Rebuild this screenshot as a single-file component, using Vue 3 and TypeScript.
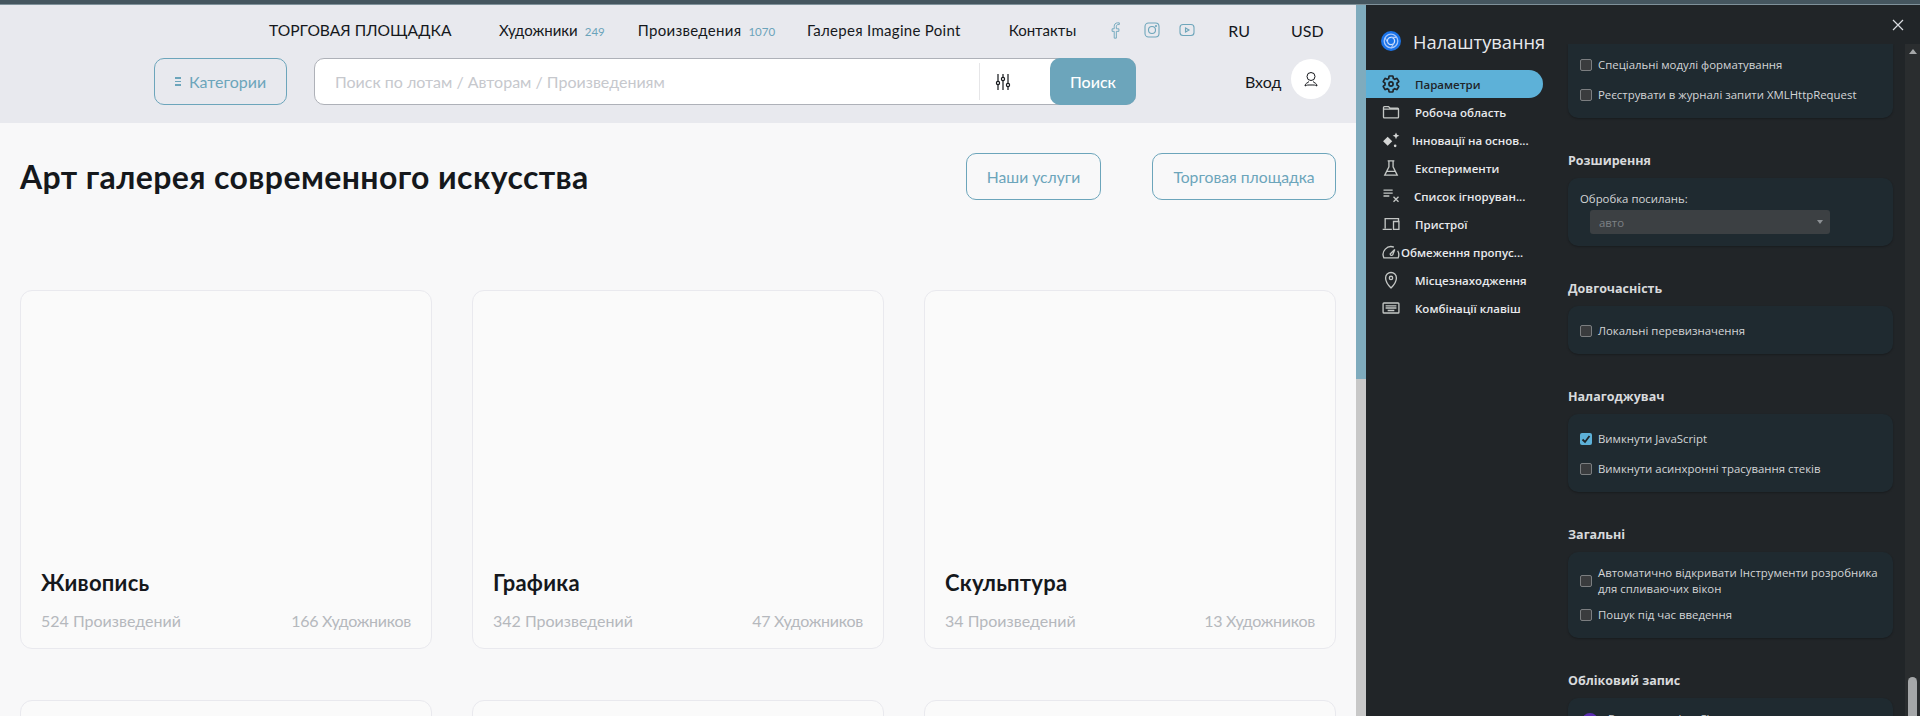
<script setup lang="ts">
const navItems = [
  { label: 'Художники', count: '249', cls: 'gap-47' },
  { label: 'Произведения', count: '1070', cls: 'gap-33 wide' },
  { label: 'Галерея Imagine Point', cls: 'gap-32 wide' },
  { label: 'Контакты', cls: 'gap-48' },
]

const categories = [
  { name: 'Живопись', works: '524 Произведений', artists: '166 Художников' },
  { name: 'Графика', works: '342 Произведений', artists: '47 Художников' },
  { name: 'Скульптура', works: '34 Произведений', artists: '13 Художников' },
]

// Icons are Material-style paths on a 24 box
const sideItems = [
  { label: 'Параметри', cls: 'active', d: 'M19.14 12.94c.04-.3.06-.61.06-.94s-.02-.64-.07-.94l2.03-1.58c.18-.14.23-.41.12-.61l-1.92-3.32c-.12-.22-.37-.29-.59-.22l-2.39.96c-.5-.38-1.03-.7-1.62-.94l-.36-2.54c-.04-.24-.24-.41-.48-.41h-3.84c-.24 0-.43.17-.47.41l-.36 2.54c-.59.24-1.13.57-1.62.94l-2.39-.96c-.22-.08-.47 0-.59.22L2.74 8.87c-.12.21-.08.47.12.61l2.03 1.58c-.05.3-.09.63-.09.94s.02.64.07.94l-2.03 1.58c-.18.14-.23.41-.12.61l1.92 3.32c.12.22.37.29.59.22l2.39-.96c.5.38 1.03.7 1.62.94l.36 2.54c.05.24.24.41.48.41h3.84c.24 0 .44-.17.47-.41l.36-2.54c.59-.24 1.13-.56 1.62-.94l2.39.96c.22.08.47 0 .59-.22l1.92-3.32c.12-.22.07-.47-.12-.61l-2.01-1.58zM12 14.500a2.500 2.500 0 1 1 0-5 2.500 2.500 0 0 1 0 5z' },
  { label: 'Робоча область', d: 'M3 6.500a1 1 0 0 1 1-1h5l2 2h9a1 1 0 0 1 1 1v9.500a1 1 0 0 1-1 1H4a1 1 0 0 1-1-1zM3 8.500h18' },
  { label: 'Інновації на основ...', cls: 'shift-3', fill: true, d: 'M8 8l5.500 5.500L8 19l-5.500-5.500zM18 3l1.200 2.800L22 7l-2.800 1.200L18 11l-1.200-2.800L14 7l2.800-1.200zM17 17.400a1.600 1.600 0 1 1 0 3.200 1.600 1.600 0 0 1 0-3.200z' },
  { label: 'Експерименти', d: 'M8 3.500h8M9.500 3.500v7L4.500 20.500h15L14.500 10.500v-7M7 16h10' },
  { label: 'Список ігноруван...', cls: 'shift-1', d: 'M3 5h11M3 8.500h11M3 12h7M15 13l6 6M21 13l-6 6' },
  { label: 'Пристрої', d: 'M5 17.500V5.500h16V8M2 18.500h11M15 9h6.500v9.500H15z' },
  { label: 'Обмеження пропус...', cls: 'shift-14', d: 'M15.500 6.200A9.500 9.500 0 0 0 3.400 19H20.600A9.500 9.500 0 0 0 20 10.500M11 14.500l5.500-5.500-2.500 6.500a1.700 1.700 0 0 1-3-1z' },
  { label: 'Місцезнаходження', d: 'M12 21.500s-6.500-6.500-6.500-12a6.500 6.500 0 0 1 13 0c0 5.500-6.500 12-6.500 12zM12 11.500a2 2 0 1 1 0-4 2 2 0 0 1 0 4z' },
  { label: 'Комбінації клавіш', d: 'M3.500 6h17a1 1 0 0 1 1 1v10a1 1 0 0 1-1 1h-17a1 1 0 0 1-1-1V7a1 1 0 0 1 1-1zM5.500 9.500h13M5.500 12h13M8 15h8' },
]
</script>

<template>
  <div class="strip"></div>
  <div class="shell">
    <main class="page">
      <header class="head">
        <div class="top-row">
          <span class="market">ТОРГОВАЯ ПЛОЩАДКА</span>
          <span v-for="item in navItems" :key="item.label" class="nav-item" :class="item.cls">
            {{ item.label }}<small v-if="item.count">{{ item.count }}</small>
          </span>
          <svg class="social fb" viewBox="0 0 10 20" width="9" height="17"><path d="M6 19V11h3V8H6V5.500C6 4 6.700 3 8 3h1.500V1H7.500C4.800 1 3.500 2.800 3.500 5.300V8H1v3h2.500v8z" /></svg>
          <svg class="social ig" viewBox="0 0 16 16" width="16" height="16"><rect x="1" y="1" width="14" height="14" rx="3.500" /><circle cx="8" cy="8" r="3.500" /><circle cx="12" cy="4" r=".5" /></svg>
          <svg class="social yt" viewBox="0 0 16 14" width="16" height="14"><rect x="1" y="1.500" width="14" height="11" rx="3" /><path d="M6.500 5v4l3.500-2z" /></svg>
          <span class="lang">RU</span>
          <span class="cur">USD</span>
        </div>
        <div class="search-row">
          <button class="cat-btn"><span class="cat-icon"><i></i><i></i><i></i></span>Категории</button>
          <div class="search">
            <span class="placeholder">Поиск по лотам / Авторам / Произведениям</span>
            <span class="filter">
              <svg viewBox="0 0 16 20" width="16" height="20"><path d="M3 2v16M8 2v16M13 2v16" /><circle cx="3" cy="11" r="1.600" /><circle cx="8" cy="7" r="1.600" /><circle cx="13" cy="13" r="1.600" /></svg>
            </span>
            <button class="search-btn">Поиск</button>
          </div>
          <span class="login">Вход</span>
          <span class="avatar">
            <svg viewBox="0 0 16 16" width="16" height="16"><circle cx="8" cy="5.500" r="4" /><path d="M2 15c0-3 3-3 4-4.500M14 15c0-3-3-3-4-4.500M2 15c2-1.200 3-1 6-1s4-.2 6 1" /></svg>
          </span>
        </div>
      </header>

      <div class="body">
        <div class="title-row">
          <h1>Арт галерея современного искусства</h1>
          <button class="ghost services">Наши услуги</button>
          <button class="ghost market-btn">Торговая площадка</button>
        </div>
        <div class="grid">
          <article v-for="c in categories" :key="c.name" class="card">
            <h2>{{ c.name }}</h2>
            <div class="meta"><span>{{ c.works }}</span><span class="artists">{{ c.artists }}</span></div>
          </article>
          <article v-for="n in 3" :key="n" class="card"></article>
        </div>
      </div>
    </main>
    <div class="page-scroll"><div class="page-thumb"></div></div>

    <aside class="panel">
      <nav class="side">
        <div class="brand">
          <svg viewBox="0 0 20 20" width="20" height="20">
            <circle cx="10" cy="10" r="10" fill="#1a73e8" />
            <circle cx="10" cy="10" r="6.800" fill="none" stroke="#a8c7fa" stroke-width="1.300" />
            <circle cx="10" cy="10" r="3.600" fill="#1a73e8" stroke="#d3e3fd" stroke-width="1.300" />
            <path d="M10 6.400h6M7 12l-3-5.200M13 12l-3 5.200" stroke="#a8c7fa" stroke-width="1.100" fill="none" />
          </svg>
          <span>Налаштування</span>
        </div>
        <div v-for="s in sideItems" :key="s.label" class="side-item" :class="s.cls">
          <svg class="side-icon" :class="{ solid: s.fill }" viewBox="0 0 24 24" width="20" height="20"><path :d="s.d" /></svg>
          <span class="side-label">{{ s.label }}</span>
        </div>
      </nav>

      <div class="settings-wrap">
        <div class="close-row">
          <svg viewBox="0 0 12 12" width="12" height="12"><path d="M1 1l10 10M11 1L1 11" /></svg>
        </div>
        <div class="settings-body">
          <div class="settings">
            <section class="box first">
              <label class="row"><i class="check"></i>Спеціальні модулі форматування</label>
              <label class="row"><i class="check"></i>Реєструвати в журналі запити XMLHttpRequest</label>
            </section>

            <h3>Розширення</h3>
            <section class="box links">
              <div class="field-label">Обробка посилань:</div>
              <div class="select"><span>авто</span><b></b></div>
            </section>

            <h3>Довгочасність</h3>
            <section class="box">
              <label class="row"><i class="check"></i>Локальні перевизначення</label>
            </section>

            <h3>Налагоджувач</h3>
            <section class="box">
              <label class="row"><i class="check on">
                <svg viewBox="0 0 12 12" width="12" height="12"><path d="M2.500 6.500l2.500 2.500 4.500-6" /></svg>
              </i>Вимкнути JavaScript</label>
              <label class="row"><i class="check"></i>Вимкнути асинхронні трасування стеків</label>
            </section>

            <h3>Загальні</h3>
            <section class="box">
              <label class="row tall"><i class="check"></i><span>Автоматично відкривати Інструменти розробника<br />для спливаючих вікон</span></label>
              <label class="row"><i class="check"></i>Пошук під час введення</label>
            </section>

            <h3>Обліковий запис</h3>
            <section class="box account">
              <i class="account-pic"></i>
              <span>Виконано вхід у Chrome як</span>
            </section>
          </div>
          <div class="settings-scroll">
            <b class="arrow"></b>
            <div class="settings-thumb"></div>
          </div>
        </div>
      </div>
    </aside>
  </div>
</template>

<style>
html,
body {
  margin: 0;
  height: 716px;
  overflow: hidden;
  background: #f8f8f9;
}
</style>

<style scoped>
.strip {
  height: 5px;
  background: #45565f;
  border-bottom: 1px solid #7f919a;
  box-sizing: border-box;
}

.shell {
  display: flex;
  height: 711px;
  overflow: hidden;
}

.page {
  width: 1356px;
  flex: none;
  overflow: hidden;
  font-family: "Lato", "Noto Sans", sans-serif;
  color: #15181c;
  background: #f8f8f9;
}

.head {
  height: 118px;
  background: #e8e9ee;
  box-sizing: border-box;
}

.top-row {
  display: flex;
  align-items: center;
  height: 50px;
  padding-left: 269px;
  font-size: 15px;
  white-space: nowrap;
}

.market {
  width: 183px;
  font-size: 15.600px;
}

.nav-item small {
  margin-left: 7px;
  font-size: 11.500px;
  letter-spacing: 0;
  color: #6ba3ba;
}

.wide {
  letter-spacing: 0.3px;
}

.gap-47 { margin-left: 47px; }
.gap-48 { margin-left: 48px; }
.gap-33 { margin-left: 33px; }
.gap-32 { margin-left: 32px; }

.social {
  flex: none;
  fill: none;
  stroke: #6ea6bb;
  stroke-width: 1.100;
}

.fb { margin-left: 35px; }
.ig { margin-left: 24px; }
.yt { margin-left: 19px; }

.lang,
.cur {
  font-size: 16px;
}

.lang { margin-left: 33px; }
.cur { margin-left: 41px; }

.search-row {
  display: flex;
  align-items: center;
  height: 47px;
  margin-top: 3px;
  padding-left: 154px;
}

.cat-btn {
  display: flex;
  align-items: center;
  justify-content: center;
  gap: 8px;
  width: 133px;
  height: 47px;
  border: 1px solid #6ca5bb;
  border-radius: 10px;
  background: transparent;
  color: #6ca5bb;
  font: 16px "Lato", "Noto Sans", sans-serif;
}

.cat-icon {
  display: flex;
  flex-direction: column;
  gap: 2px;
}

.cat-icon i {
  display: block;
  width: 6px;
  height: 1.500px;
  background: #6ca5bb;
}

.search {
  display: flex;
  align-items: center;
  width: 822px;
  height: 47px;
  margin-left: 27px;
  box-sizing: border-box;
  border: 1px solid #aeb1b8;
  border-radius: 10px;
  background: #fff;
}

.placeholder {
  flex: 1;
  padding-left: 20px;
  font-size: 16px;
  color: #c6c8cd;
}

.filter {
  display: flex;
  align-items: center;
  width: 71px;
  height: 37px;
  padding-left: 15px;
  box-sizing: border-box;
  border-left: 1px solid #e6e6e8;
}

.filter svg {
  fill: #fff;
  stroke: #15181c;
  stroke-width: 1.200;
}

.search-btn {
  width: 86px;
  height: 47px;
  margin: 0 -1px 0 0;
  border: 0;
  border-radius: 10px;
  background: #6ca5bb;
  color: #fff;
  font: 500 16px "Lato", "Noto Sans", sans-serif;
}

.login {
  margin-left: 109px;
  font-size: 16px;
}

.avatar {
  display: flex;
  align-items: center;
  justify-content: center;
  width: 40px;
  height: 40px;
  margin: -6px 0 0 10px;
  border-radius: 50%;
  background: #fff;
}

.avatar svg {
  fill: none;
  stroke: #15181c;
  stroke-width: 1;
}

.body {
  padding: 30px 20px 0;
}

.title-row {
  display: flex;
  align-items: center;
  height: 47px;
}

h1 {
  flex: 1;
  margin: 0;
  font-size: 32px;
  font-weight: 700;
  letter-spacing: 0.4px;
}

.ghost {
  width: 135px;
  height: 47px;
  padding: 0;
  border: 1px solid #6ca5bb;
  border-radius: 10px;
  background: transparent;
  color: #6ca5bb;
  font: 15.700px "Lato", "Noto Sans", sans-serif;
}

.market-btn {
  width: 184px;
}

.services {
  margin-right: 51px;
}

.grid {
  display: grid;
  grid-template-columns: repeat(3, 412px);
  gap: 51px 40px;
  margin-top: 90px;
}

.card {
  display: flex;
  flex-direction: column;
  justify-content: flex-end;
  height: 359px;
  padding: 0 20px 18px;
  box-sizing: border-box;
  border: 1px solid #e9e9ee;
  border-radius: 12px;
  background: #fafafa;
}

h2 {
  margin: 0 0 15px;
  font-size: 22px;
  font-weight: 700;
  letter-spacing: 0.25px;
}

.meta {
  display: flex;
  justify-content: space-between;
  font-size: 16px;
  color: #b5b8bd;
}

.artists {
  letter-spacing: -0.25px;
}

.page-scroll {
  width: 10px;
  flex: none;
  background: #c8c8c8;
}

.page-thumb {
  height: 374px;
  background: #7fabbd;
}

.panel {
  display: flex;
  flex: 1;
  min-width: 0;
  background: #212528;
  font-family: "Open Sans", "Noto Sans", sans-serif;
  color: #d8dadc;
}

.side {
  width: 196px;
  flex: none;
  padding-top: 25px;
}

.brand {
  display: flex;
  align-items: center;
  gap: 12px;
  height: 22px;
  margin: 0 0 18px 15px;
  font-size: 18.300px;
  color: #e8eaed;
  white-space: nowrap;
}

.side-item {
  display: flex;
  align-items: center;
  width: 177px;
  height: 28px;
  padding-left: 15px;
  box-sizing: border-box;
  font-size: 11.500px;
  font-weight: 600;
  color: #e8eaed;
  white-space: nowrap;
}

.side-item.active {
  background: #5db1d8;
  color: #1f2428;
  border-radius: 0 14px 14px 0;
}

.side-icon {
  flex: none;
  fill: none;
  stroke: #c4c7c5;
  stroke-width: 1.600;
}

.side-icon.solid {
  fill: #d4d6d5;
  stroke: none;
}

.active .side-icon {
  stroke: #1f2428;
  stroke-width: 2;
}

.side-label {
  margin-left: 14px;
}

.shift-1 .side-label { margin-left: 13px; }
.shift-3 .side-label { margin-left: 11px; }
.shift-14 .side-label { margin-left: 0; }

.settings-wrap {
  flex: 1;
  min-width: 0;
}

.close-row {
  display: flex;
  justify-content: flex-end;
  align-items: center;
  height: 39px;
  padding-right: 16px;
  box-sizing: border-box;
}

.close-row svg {
  fill: none;
  stroke: #dadce0;
  stroke-width: 1.200;
}

.settings-body {
  display: flex;
  justify-content: space-between;
  height: 672px;
  overflow: hidden;
}

.settings {
  width: 325px;
  margin-left: 6px;
}

.box {
  padding: 10px 12px 8px;
  box-sizing: border-box;
  border-radius: 10px;
  background: #1f2a30;
  box-shadow: 0 1px 2px rgb(0 0 0 / 0.25);
}

.box.first {
  height: 74px;
  border-radius: 0 0 10px 10px;
  padding-top: 6px;
}

.links {
  height: 68px;
}

h3 {
  height: 18px;
  margin: 33px 0 9px;
  font-size: 12.500px;
  line-height: 20px;
  font-weight: 700;
  color: #d8dadc;
}

.row {
  display: flex;
  align-items: center;
  gap: 6px;
  height: 30px;
  padding-bottom: 2px;
  box-sizing: border-box;
  font-size: 11.400px;
  color: #d3d5d7;
  white-space: nowrap;
}

.row.tall {
  height: 38px;
  padding-bottom: 0;
  line-height: 16px;
}

.check {
  display: flex;
  flex: none;
  width: 12px;
  height: 12px;
  margin-top: 2px;
  box-sizing: border-box;
  border: 1px solid #7b7e80;
  border-radius: 2px;
  background: #3a3c3e;
}

.tall .check {
  margin-top: 0;
}

.check.on {
  border: 0;
  background: #5db1d8;
}

.check svg {
  fill: none;
  stroke: #202528;
  stroke-width: 1.800;
}

.field-label {
  margin-top: 3px;
  font-size: 11.400px;
  line-height: 16px;
  color: #d3d5d7;
}

.select {
  display: flex;
  align-items: center;
  justify-content: space-between;
  width: 240px;
  height: 24px;
  margin: 3px 0 0 10px;
  padding: 0 7px 0 9px;
  box-sizing: border-box;
  border-radius: 3px;
  background: #3c4043;
  font-size: 11.400px;
  color: #7d8185;
}

.select b {
  border-left: 3.500px solid transparent;
  border-right: 3.500px solid transparent;
  border-top: 4px solid #8c9094;
}

.account {
  display: flex;
  align-items: flex-start;
  gap: 10px;
  height: 60px;
  padding: 15px 14px;
  font-size: 11.400px;
  line-height: 1;
}

.account-pic {
  width: 16px;
  height: 16px;
  border-radius: 50%;
  background: #5b2db3;
}

.settings-scroll {
  display: flex;
  flex-direction: column;
  align-items: center;
  width: 15px;
  background: #2a2d2f;
}

.arrow {
  margin-top: 5px;
  border-left: 4px solid transparent;
  border-right: 4px solid transparent;
  border-bottom: 5px solid #a5a7a9;
}

.settings-thumb {
  width: 9px;
  height: 40px;
  margin-top: 623px;
  border-radius: 5px 5px 0 0;
  background: #a5a7a9;
}
</style>
